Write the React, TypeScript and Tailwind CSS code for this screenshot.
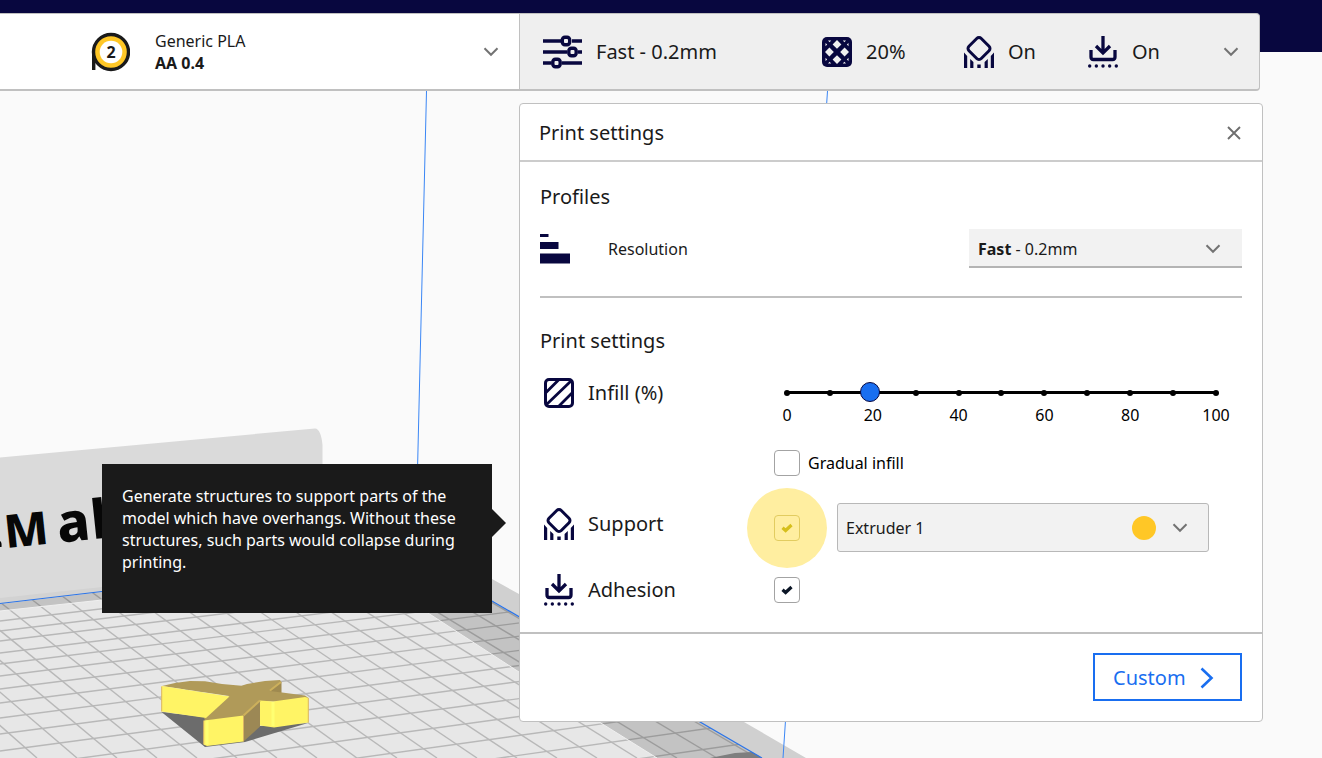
import { useState, type ReactNode } from "react";

const NAVY = "#08073f";

const GRID_ROWS = [621, 631, 641, 653, 664, 676, 689, 703, 718, 734, 751, 769, 788, 808, 829, 851, 874, 898];
const GRID_COLUMNS = Array.from({ length: 20 }, (_, i) => 37 + i * 40);

function GridLines({ stroke }: { stroke: string }) {
  return (
    <g stroke={stroke} strokeWidth="1.4" fill="none">
      {GRID_ROWS.map((y) => (
        <path key={`r${y}`} d={`M0 ${y}L9415 -508`} />
      ))}
      {GRID_COLUMNS.map((x) => (
        <path key={`c${x}`} d={`M${x} 758L-1402 -508`} />
      ))}
    </g>
  );
}

function Scene() {
  return (
    <svg
      className="absolute inset-0 size-full"
      viewBox="0 0 1322 758"
      preserveAspectRatio="xMinYMin slice"
      aria-hidden="true"
    >
      <defs>
        <clipPath id="bed">
          <path d="M0 611L102 600L260 580L375 578L428 613L519 672L657 758H0Z" />
        </clipPath>
        <clipPath id="rim">
          <path d="M0 604L102 592L260 575L450 576L492 601L762 758H0Z" />
        </clipPath>
      </defs>
      <path d="M0 457.500L315 428.500Q321 429 322.500 445V570L102 591L0 603Z" fill="#dadada" />
      <path d="M0 598L102 587V592L0 604Z" fill="#d2d2d2" />
      <path d="M440 548L492 579L519 594L744 722L806 758H762L440 570Z" fill="#d0d0d0" />
      <path d="M0 604L102 592L260 575L450 576L492 601L762 758H0Z" fill="#c3c3c3" />
      <g clipPath="url(#rim)">
        <GridLines stroke="#9c9c9c" />
      </g>
      <path d="M0 611L102 600L260 580L375 578L428 613L519 672L657 758H0Z" fill="#e7e7e7" />
      <g clipPath="url(#bed)">
        <GridLines stroke="#b8b8b8" />
      </g>
      <path d="M0 611L102 600M428 613L519 672L657 758" stroke="#efefef" fill="none" />
      <path d="M710 758L735 753L752 752L762 758Z" fill="#7e7e7e" />
      <path d="M0 603.500L102 591.500M450 577L492 601L762 758" stroke="#2b74e8" strokeWidth="1.2" fill="none" />
      <path d="M426.500 91L417.500 470M827.500 91L783 758" stroke="#3a86f5" fill="none" />
      <path d="M0 541Q2 542 1.500 547H0Z" fill="#070707" />
      <text
        y="549"
        fill="#070707"
        fontFamily="Noto Sans, sans-serif"
        fontWeight="800"
        transform="rotate(-6 0 549)"
      >
        <tspan x="6" fontSize="46">
          M
        </tspan>
        <tspan x="59" fontSize="54">
          a
        </tspan>
        <tspan x="93" fontSize="54">
          k
        </tspan>
      </text>
      <g strokeLinejoin="round">
        <path d="M161.500 712L205 747L245 742L308 723L260 726L204 717Z" fill="#6c6c6c" />
        <path d="M269 691L281.500 682V695L272 697Z" fill="#9f8a50" />
        <path
          d="M162 686L175 683L190 681L205 681.300L222 684L241.500 685.700L247 684L265 681L280 680L281.500 682.500L269.500 691L282 692.500L305 695.500L308.500 698L283 702L260 701L243.500 717L205 720.500L204 718L229 696Z"
          fill="#b09a59"
        />
        <path d="M162 686L229.500 696.500L206 718L161.500 711.500V686.500Z" fill="#fff465" />
        <path d="M204 720.500L243.500 715.500V741.500L207 746L203.500 744.500Z" fill="#fff465" />
        <path d="M243.500 715.500L260 700.500V726.500L243.500 741.500Z" fill="#9c8855" />
        <path d="M260 700.500L273 701.500L305 697L308.500 698V722.500L274 727.500L260 725.500Z" fill="#fff465" />
        <path d="M161.700 686.500V711.500M203.700 720.500V744M308.300 698V722.500M243.500 716V741.500" stroke="#dab463" fill="none" />
        <path d="M243.500 715.500L260 700.500M270 690.500L281 682" stroke="#ccb05c" strokeWidth="2" fill="none" />
        <path d="M207 720.500V744.500M273 702V726" stroke="#ffff72" strokeWidth="3" fill="none" />
      </g>
    </svg>
  );
}

function SpoolIcon() {
  return (
    <svg width="40" height="40" viewBox="0 0 40 40" aria-hidden="true">
      <path d="M3.700 20V38" stroke="#1a1a1a" strokeWidth="3.400" />
      <circle cx="21" cy="20" r="17.500" fill="#ffc726" stroke="#1a1a1a" strokeWidth="3.400" />
      <circle cx="21" cy="20" r="11.300" fill="#fff" />
      <text
        x="21"
        y="25.500"
        textAnchor="middle"
        fontFamily="Noto Sans, sans-serif"
        fontWeight="700"
        fontSize="16"
        fill="#1a1a1a"
      >
        2
      </text>
    </svg>
  );
}

function SlidersIcon() {
  return (
    <svg width="40" height="34" viewBox="0 0 40 34" fill="none" stroke={NAVY} strokeWidth="3.400" aria-hidden="true">
      <path d="M0 6H18M29 6H39M0 17H24M35 17H39M0 28H8.500M19 28H39" />
      <rect x="19.300" y="2.300" width="7.400" height="7.400" rx="2.600" />
      <rect x="25.800" y="13.300" width="7.400" height="7.400" rx="2.600" />
      <rect x="9.800" y="24.300" width="7.400" height="7.400" rx="2.600" />
    </svg>
  );
}

function LatticeIcon() {
  return (
    <svg width="30" height="30" viewBox="0 0 30 30" aria-hidden="true">
      <rect width="30" height="30" rx="5" fill={NAVY} />
      <g fill="#f0f0f0">
        <path d="M15 3L19.400 7.400L15 11.800L10.600 7.400Z" />
        <path d="M15 18.200L19.400 22.600L15 27L10.600 22.600Z" />
        <path d="M7.400 10.600L11.800 15L7.400 19.400L3 15Z" />
        <path d="M22.600 10.600L27 15L22.600 19.400L18.200 15Z" />
        <path d="M6 3.500H9.200L7.600 5.200ZM20.800 3.500H24L22.400 5.200ZM6 26.500H9.200L7.600 24.800ZM20.800 26.500H24L22.400 24.800Z" />
        <path d="M3.500 6V9.200L5.200 7.600ZM26.500 6V9.200L24.800 7.600ZM3.500 20.800V24L5.200 22.400ZM26.500 20.800V24L24.800 22.400Z" />
      </g>
    </svg>
  );
}

function HatchIcon() {
  return (
    <svg width="30" height="30" viewBox="0 0 30 30" fill="none" stroke={NAVY} aria-hidden="true">
      <rect x="1.500" y="1.500" width="27" height="27" rx="3.500" strokeWidth="3" />
      <path d="M2 14.500L14.500 2M2 27L27 3M15 28L28 15" strokeWidth="2.800" />
    </svg>
  );
}

function SupportIcon() {
  return (
    <svg width="30" height="32" viewBox="0 0 30 32" fill="none" aria-hidden="true">
      <rect x="6.300" y="3.800" width="17.400" height="17.400" rx="3.200" transform="rotate(45 15 12.500)" stroke={NAVY} strokeWidth="3" />
      <path
        fill={NAVY}
        d="M0 16.500L3.200 20V32H0ZM30 16.500L26.800 20V32H30ZM6.200 23L9.400 26V32H6.200ZM23.800 23L20.600 26V32H23.800ZM13.300 28.500H16.700V32H13.300Z"
      />
    </svg>
  );
}

function AdhesionIcon() {
  return (
    <svg width="30" height="32" viewBox="0 0 30 32" fill="none" stroke={NAVY} strokeWidth="3.300" aria-hidden="true">
      <path d="M15 0V16M8 10L15 17L22 10" />
      <path d="M3 14V21Q3 23.500 5.500 23.500H24.500Q27 23.500 27 21V14" />
      <g fill={NAVY} stroke="none">
        <circle cx="1.700" cy="30" r="1.700" />
        <circle cx="8.350" cy="30" r="1.700" />
        <circle cx="15" cy="30" r="1.700" />
        <circle cx="21.650" cy="30" r="1.700" />
        <circle cx="28.300" cy="30" r="1.700" />
      </g>
    </svg>
  );
}

function ResolutionIcon() {
  return (
    <svg width="30" height="30" viewBox="0 0 30 30" fill={NAVY} aria-hidden="true">
      <path d="M0 0H8.500V3H0ZM0 8H18.500V15H0ZM0 19.500H30V29.500H0Z" />
    </svg>
  );
}

function Chevron() {
  return (
    <svg width="16" height="10" viewBox="0 0 16 10" fill="none" stroke="#737373" strokeWidth="2" aria-hidden="true">
      <path d="M1.500 1.200L8 7.800L14.500 1.200" />
    </svg>
  );
}

function CheckBox({ id, checked, onChange, lit }: { id: string; checked: boolean; onChange: (v: boolean) => void; lit?: boolean }) {
  return (
    <span className="relative grid size-[26px] shrink-0 place-items-center">
      {lit && <span className="absolute -inset-[27px] rounded-full bg-[#ffeea0]" />}
      <input
        id={id}
        type="checkbox"
        checked={checked}
        onChange={(e) => onChange(e.target.checked)}
        className={
          lit
            ? "relative col-start-1 row-start-1 size-[26px] appearance-none rounded-[4px] border border-[#e2cc60]"
            : "relative col-start-1 row-start-1 size-[26px] appearance-none rounded-[4px] border border-[#a3a3a3] bg-white"
        }
      />
      {checked && (
        <svg
          width="12"
          height="10"
          viewBox="0 0 12 10"
          className="pointer-events-none relative col-start-1 row-start-1"
          fill="none"
          stroke={lit ? "#d6bf1c" : "#0b1626"}
          strokeWidth="3.200"
          aria-hidden="true"
        >
          <path d="M1.500 4.800L4.600 7.500L10.500 2" />
        </svg>
      )}
    </span>
  );
}

function SettingLabel({ htmlFor, icon, children }: { htmlFor: string; icon: ReactNode; children: ReactNode }) {
  return (
    <label htmlFor={htmlFor} className="flex h-8 items-center gap-[14px] pl-1 text-xl">
      {icon}
      {children}
    </label>
  );
}

export default function App() {
  const [profile, setProfile] = useState("Fast");
  const [infill, setInfill] = useState(20);
  const [gradual, setGradual] = useState(false);
  const [support, setSupport] = useState(true);
  const [adhesion, setAdhesion] = useState(true);

  return (
    <div className="relative flex min-h-screen flex-col overflow-hidden bg-[linear-gradient(#08073f_52px,#fafafa_52px)] font-['Noto_Sans',sans-serif] text-[#1a1a1a]">
      <Scene />

      <header className="relative mt-[13px] mr-[62px] flex h-[78px]">
        <button
          type="button"
          className="flex min-w-0 flex-1 items-center border-t border-b-2 border-[#c0c0c0] bg-white pt-px pr-5 pl-[90px] text-left"
        >
          <SpoolIcon />
          <span className="ml-[25px] flex-1 text-base leading-[22px]">
            <span className="block">Generic PLA</span>
            <span className="block font-bold">AA 0.4</span>
          </span>
          <Chevron />
        </button>
        <button
          type="button"
          className="flex w-[741px] items-center rounded-r-[4px] border border-b-2 border-[#c0c0c0] bg-[#efefef] pt-px pr-5 pl-[23px] text-xl"
        >
          <SlidersIcon />
          <span className="ml-[13px] flex-1 text-left">Fast - 0.2mm</span>
          <span className="flex items-center">
            <LatticeIcon />
            <span className="ml-[14px] w-[98px] text-left">20%</span>
            <SupportIcon />
            <span className="ml-[14px] w-[80px] text-left">On</span>
            <AdhesionIcon />
            <span className="ml-[14px] w-[91px] text-left">On</span>
          </span>
          <Chevron />
        </button>
      </header>

      <section className="relative mt-3 mr-[59px] w-[744px] self-end rounded-[4px] border border-[#c0c0c0] bg-white">
        <div className="flex h-[58px] items-center justify-between border-b-2 border-[#cccccc] pt-px pr-[21px] pl-[19px]">
          <h1 className="text-xl">Print settings</h1>
          <button type="button" aria-label="Close">
            <svg width="14" height="14" viewBox="0 0 14 14" stroke="#6e6e6e" strokeWidth="1.900" aria-hidden="true">
              <path d="M1 1L13 13M13 1L1 13" />
            </svg>
          </button>
        </div>

        <div className="px-5 pt-[21px] pb-[26px]">
          <h2 className="text-xl">Profiles</h2>
          <div className="mt-[18px] flex h-[39px] items-center">
            <ResolutionIcon />
            <label htmlFor="resolution" className="ml-[38px] flex-1 text-base">
              Resolution
            </label>
            <div className="relative flex h-full w-[273px] items-center border-b-2 border-[#b4b4b4] bg-[#f2f2f2] pt-[2px] pr-[21px] pl-[9px] text-base">
              <span className="flex-1">
                <strong>{profile}</strong> - 0.2mm
              </span>
              <Chevron />
              <select
                id="resolution"
                value={profile}
                onChange={(e) => setProfile(e.target.value)}
                className="absolute inset-0 size-full opacity-0"
              >
                <option>Fast</option>
              </select>
            </div>
          </div>

          <hr className="mt-7 border-t-2 border-[#c0c0c0]" />

          <h2 className="mt-[29px] text-xl">Print settings</h2>
          <div className="mt-[22px] grid grid-cols-[234px_1fr]">
            <SettingLabel htmlFor="infill" icon={<HatchIcon />}>
              Infill (%)
            </SettingLabel>
            <div className="pt-[5px] pr-5">
              <div className="relative h-5">
                <div className="absolute top-[9px] right-[6px] left-[13px] flex h-[3px] items-center justify-between bg-black">
                  {Array.from({ length: 11 }, (_, i) => (
                    <span key={i} className="-mx-[3px] size-[6px] rounded-full bg-black" />
                  ))}
                </div>
                <input
                  id="infill"
                  type="range"
                  min="0"
                  max="100"
                  step="10"
                  value={infill}
                  onChange={(e) => setInfill(Number(e.target.value))}
                  className="relative block h-5 w-full appearance-none bg-transparent [&::-webkit-slider-thumb]:size-5 [&::-webkit-slider-thumb]:appearance-none [&::-webkit-slider-thumb]:rounded-full [&::-webkit-slider-thumb]:border [&::-webkit-slider-thumb]:border-[#08073f] [&::-webkit-slider-thumb]:bg-[#196ef0]"
                />
              </div>
              <div className="mt-[2px] flex justify-between pr-[6px] pl-[13px] text-base leading-[22px] text-black">
                {[0, 20, 40, 60, 80, 100].map((n) => (
                  <span key={n} className="flex w-0 justify-center">
                    {n}
                  </span>
                ))}
              </div>
              <div className="mt-6 flex items-center gap-2">
                <CheckBox id="gradual" checked={gradual} onChange={setGradual} />
                <label htmlFor="gradual" className="text-base text-black">
                  Gradual infill
                </label>
              </div>
            </div>
          </div>

          <div className="relative mt-[27px] grid h-[49px] grid-cols-[234px_1fr] items-center">
            <div className="pb-[7px]">
              <SettingLabel htmlFor="support" icon={<SupportIcon />}>
                Support
              </SettingLabel>
            </div>
            <div className="flex items-center pr-[33px]">
              <CheckBox id="support" checked={support} onChange={setSupport} lit />
              <div className="relative ml-[37px] flex-1">
                <select
                  aria-label="Support extruder"
                  className="block h-[49px] w-full appearance-none rounded-[3px] border border-[#b8b8b8] bg-[#f2f2f2] pl-2 text-base"
                >
                  <option>Extruder 1</option>
                </select>
                <span className="pointer-events-none absolute inset-y-0 right-[21px] flex items-center gap-4">
                  <span className="size-6 rounded-full bg-[#ffc726]" />
                  <Chevron />
                </span>
              </div>
            </div>

            <div
              role="tooltip"
              className="absolute -top-[39px] right-full mr-12 h-[149px] w-[390px] bg-[#1a1a1a] px-5 pt-[21px] text-base leading-[22px] text-white"
            >
              Generate structures to support parts of the model which have overhangs. Without these structures, such parts
              would collapse during printing.
              <span className="absolute top-[45px] left-full h-7 w-[14px] bg-[#1a1a1a] [clip-path:polygon(0_0,100%_50%,0_100%)]" />
            </div>
          </div>

          <div className="mt-[22px] grid grid-cols-[234px_1fr] items-center">
            <SettingLabel htmlFor="adhesion" icon={<AdhesionIcon />}>
              Adhesion
            </SettingLabel>
            <CheckBox id="adhesion" checked={adhesion} onChange={setAdhesion} />
          </div>
        </div>

        <footer className="flex justify-end border-t-2 border-[#c0c0c0] px-5 pt-[19px] pb-5">
          <button
            type="button"
            className="flex h-12 w-[149px] items-center justify-between border-2 border-[#196ef0] pt-px pr-[26px] pl-[18px] text-xl text-[#196ef0]"
          >
            Custom
            <svg width="14" height="22" viewBox="0 0 14 22" fill="none" stroke="#196ef0" strokeWidth="2.600" aria-hidden="true">
              <path d="M1.500 1.500L11.500 11L1.500 20.500" />
            </svg>
          </button>
        </footer>
      </section>
    </div>
  );
}
